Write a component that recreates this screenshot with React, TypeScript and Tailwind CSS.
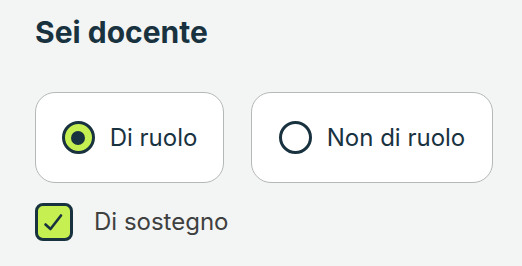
import { useState } from "react";

type Option = { id: string; label: string; width: string };

const options: Option[] = [
  { id: "ruolo", label: "Di ruolo", width: "w-[189px]" },
  { id: "non-ruolo", label: "Non di ruolo", width: "w-[242px]" },
];

function Radio({ checked }: { checked: boolean }) {
  return (
    <span
      className={`flex h-[33px] w-[33px] shrink-0 items-center justify-center rounded-full border-[3px] border-[#19323f] ${
        checked ? "bg-[#c6ef52]" : "bg-white"
      }`}
    >
      {checked && <span className="h-[14px] w-[14px] rounded-full bg-[#19323f]" />}
    </span>
  );
}

export default function App() {
  const [selected, setSelected] = useState("ruolo");
  const [support, setSupport] = useState(true);

  return (
    <div className="min-h-[266px] bg-[#f3f5f4] pl-[35px] pt-[12px] font-['Inter',sans-serif]">
      <h2 className="text-[30px] font-bold leading-[40px] text-[#19323f]">Sei docente</h2>

      <div className="mt-[40px] flex gap-[27px]">
        {options.map((opt) => (
          <button
            key={opt.id}
            onClick={() => setSelected(opt.id)}
            className={`flex h-[91px] shrink-0 ${opt.width} items-center justify-center gap-[15px] rounded-[20px] border border-[#b4b8b7] bg-white`}
          >
            <Radio checked={selected === opt.id} />
            <span className="text-[24px] leading-none text-[#19323f]">{opt.label}</span>
          </button>
        ))}
      </div>

      <label className="mt-[20px] flex cursor-pointer items-center gap-[21px]">
        <span
          onClick={() => setSupport(!support)}
          className="flex h-[38px] w-[38px] items-center justify-center rounded-[8px] border-[3px] border-[#19323f] bg-[#c6ef52]"
        >
          {support && (
            <svg width="24" height="24" viewBox="0 0 24 24" fill="none">
              <path d="M3.5 14.5l5 4.5L19 5.5" stroke="#19323f" strokeWidth="2.6" strokeLinecap="round" strokeLinejoin="round" />
            </svg>
          )}
        </span>
        <span className="text-[24px] text-[#3f4040]">Di sostegno</span>
      </label>
    </div>
  );
}
